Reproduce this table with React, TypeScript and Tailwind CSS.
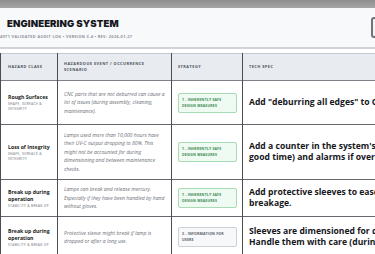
import React from 'react'

type Row = {
  hazard: string
  group: string
  scenario: string
  strategy: 1 | 3
  spec: string[]
  h: string
}

const STRATEGIES = {
  1: { label: '1 - Inherently safe design measures', cls: 'bg-[#effaf2] border-[#a6dbb4] text-[#3b8a53]' },
  3: { label: '3 - Information for users', cls: 'bg-[#f7f8fa] border-[#cdd1d7] text-[#5a5f67]' },
}

const ROWS: Row[] = [
  {
    hazard: 'Rough Surfaces',
    group: 'Shape, surface & integrity',
    scenario: 'CNC parts that are not deburred can cause a lot of issues (during assembly, cleaning, maintenance).',
    strategy: 1,
    spec: ['Add "deburring all edges" to CNC drawings.'],
    h: 'h-[44px]',
  },
  {
    hazard: 'Loss of Integrity',
    group: 'Shape, surface & integrity',
    scenario: 'Lamps used more than 10,000 hours have their UV-C output dropping to 80%. This might not be accounted for during dimensioning and between maintenance checks.',
    strategy: 1,
    spec: ["Add a counter in the system's software to warn users (replace lamps in", 'good time) and alarms if over threshold.'],
    h: 'h-[55px]',
  },
  {
    hazard: 'Break up during operation',
    group: 'Stability & break up',
    scenario: 'Lamps can break and release mercury. Especially if they have been handled by hand without gloves.',
    strategy: 1,
    spec: ['Add protective sleeves to ease handling and reduce the risk of', 'breakage.'],
    h: 'h-[37px]',
  },
  {
    hazard: 'Break up during operation',
    group: 'Stability & break up',
    scenario: 'Protective sleeve might break if lamp is dropped or after a long use.',
    strategy: 3,
    spec: ['Sleeves are dimensioned for drops from normal handling heights.', 'Handle them with care (during installation and maintenance).'],
    h: 'h-[41px]',
  },
]

export default function App() {
  return (
    <div className="w-[375px] h-[254px] overflow-hidden bg-white font-['Open_Sans',sans-serif]">
      <div className="h-[8px] bg-gradient-to-b from-[#8f8f8f] to-[#a6a6a6]" />

      {/* Header */}
      <header className="h-[41px] bg-[#f8f9fb] border-b-2 border-[#cfd3d9] flex items-center pl-[7px]">
        <div className="min-w-0 pt-[2px]">
          <h1 className="font-['Inter',sans-serif] font-black text-[9.6px] leading-[11px] tracking-[0.01em] text-[#15171b]">
            ENGINEERING SYSTEM
          </h1>
          <p className="-ml-[7px] mt-[5px] whitespace-nowrap font-bold text-[3.8px] leading-[5px] tracking-[0.1em] uppercase text-[#8b9098]">
            4971 Validated Audit Log • Version 3.4 • Rev: 2026-01-27
          </p>
        </div>
        <div className="ml-auto -mr-[36px] w-[40px] h-[21px] shrink-0 rounded-[3px] border-2 border-[#6f737a] bg-[#f2f3f5]" />
      </header>

      {/* Risk table */}
      <div className="mt-[4px]">
        <table className="w-[760px] border-collapse table-fixed">
          <colgroup>
            <col className="w-[57px]" />
            <col className="w-[114px]" />
            <col className="w-[71px]" />
            <col />
          </colgroup>
          <thead>
            <tr className="h-[27px] bg-[#e8ecf1] border-t border-[#c4c9d0] border-b border-b-[#7c8188]">
              {['Hazard class', 'Hazardous event / occurrence scenario', 'Strategy', 'Tech spec'].map((t, i) => (
                <th
                  key={t}
                  className={`px-[6px] text-left align-middle font-bold text-[3.9px] leading-[6px] tracking-[0.12em] uppercase text-[#4d535b] border-r border-[#4a4d52] ${i === 0 ? 'border-l pl-[7px]' : ''}`}
                >
                  {t}
                </th>
              ))}
            </tr>
          </thead>
          <tbody>
            {ROWS.map((r, i) => {
              const s = STRATEGIES[r.strategy]
              return (
                <tr key={i} className={`${r.h} border-b border-[#65696f]`}>
                  <td className="border-l border-r border-[#4a4d52] pl-[7px] pr-[6px] align-middle">
                    <div className="font-bold text-[5.2px] leading-[7px] text-[#1a1c20]">{r.hazard}</div>
                    <div className="font-semibold text-[3.3px] leading-[5px] tracking-[0.08em] uppercase text-[#8d9299]">{r.group}</div>
                  </td>
                  <td className="border-r border-[#4a4d52] pl-[6px] pr-[5px] align-middle">
                    <p className="italic text-[5.1px] leading-[8.4px] text-[#6c7078]">{r.scenario}</p>
                  </td>
                  <td className="border-r border-[#4a4d52] px-[6px] align-middle">
                    <div className={`w-[59px] rounded-[2px] border px-[3px] py-[3px] font-bold text-[3.5px] leading-[6px] tracking-[0.05em] uppercase ${s.cls}`}>
                      {s.label}
                    </div>
                  </td>
                  <td className="px-[6px] align-middle">
                    {r.spec.map((line) => (
                      <div key={line} className="whitespace-nowrap font-bold text-[8.6px] leading-[11.5px] text-[#15171b]">
                        {line}
                      </div>
                    ))}
                  </td>
                </tr>
              )
            })}
          </tbody>
        </table>
      </div>
    </div>
  )
}
